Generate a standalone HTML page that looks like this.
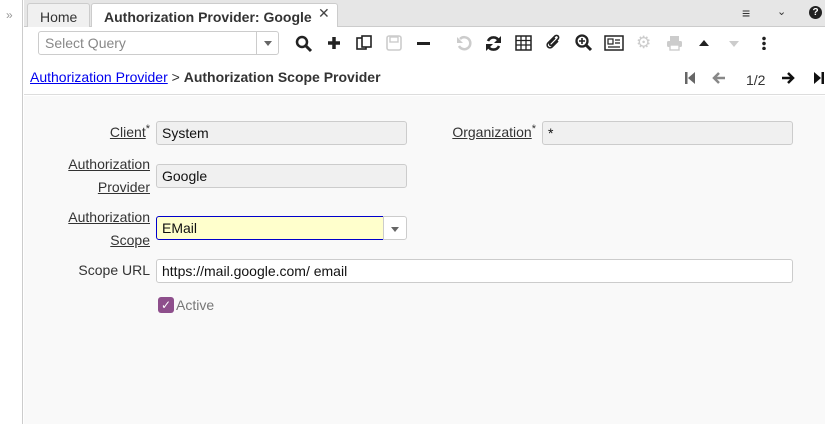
<!DOCTYPE html><html><head><style>
*{box-sizing:border-box;margin:0;padding:0}
body{width:825px;height:424px;overflow:hidden;font-family:"Liberation Sans","DejaVu Sans",sans-serif;font-size:14px;color:#333;background:#fff;position:relative}
.side{position:absolute;left:0;top:0;width:23px;height:424px;background:#fff;border-right:1px solid #ccc}
.side span{position:absolute;left:6px;top:8px;color:#999;font-size:12px}
.tabs{position:absolute;left:24px;top:0;right:0;height:27px;background:#e6e6e6;border-bottom:1px solid #ccc}
.tab{position:absolute;top:3px;height:24px;border:1px solid #ccc;border-bottom:none;border-radius:3px 3px 0 0;padding:5px 12px;font-size:14px;white-space:nowrap}
.tool{position:absolute;left:24px;top:27px;right:0;height:68px;background:#fff;border-bottom:1px solid #ddd}
.sel{position:absolute;left:14px;top:4px;width:241px;height:24px;border:1px solid #ccc;border-radius:3px;color:#888;padding:3px 6px;font-size:14px}
.sel i{position:absolute;right:0;top:0;width:22px;height:22px;border-left:1px solid #ccc}
svg{position:absolute}
.lbl{position:absolute;text-align:right;font-size:14px;color:#333;line-height:23px}
.lbl u{text-decoration:underline}
.fld{position:absolute;height:24px;border:1px solid #ccc;border-radius:3px;padding:3px 5px;font-size:14px;color:#111;background:#f0f0f0}
.content{position:absolute;left:24px;top:96px;right:0;bottom:0;background:#f9f9f9}
</style></head><body>
<div class="side"><span>»</span></div>
<div class="tabs">
<div class="tab" style="left:3px;width:63px;background:#f0f0f0;color:#333">Home</div>
<div class="tab" style="left:67px;width:247px;background:#fff;font-weight:bold;color:#333">Authorization Provider: Google</div>
<div style="position:absolute;left:294px;top:5px;font-size:14px;font-weight:bold;color:#444">✕</div>
<div style="position:absolute;left:718px;top:5px;font-size:14px;font-weight:bold">≡</div>
<div style="position:absolute;left:753px;top:5px;font-size:11px">⌄</div>
<div style="position:absolute;left:785px;top:6px;width:13px;height:13px;border-radius:50%;background:#222;color:#fff;font-size:10px;text-align:center;line-height:13px;font-weight:bold">?</div>
</div>
<div class="tool">
<div class="sel">Select Query<i><b style="position:absolute;left:7px;top:9px;border:4px solid transparent;border-top:5px solid #666"></b></i></div>
<div style="position:absolute;left:6px;top:42px;font-size:14px"><a style="color:#00e;text-decoration:underline">Authorization Provider</a> &gt; <b>Authorization Scope Provider</b></div>
</div>
<svg style="left:295px;top:35px" width="18" height="18"><circle cx="7" cy="7" r="5" fill="none" stroke="#222" stroke-width="2.5"/><path d="M11 11l5 5" stroke="#222" stroke-width="3"/></svg>
<svg style="left:326px;top:35px" width="16" height="16"><path d="M8 2v12M2 8h12" stroke="#222" stroke-width="3.5"/></svg>
<svg style="left:355px;top:34px" width="18" height="18"><rect x="2" y="4" width="9" height="11" fill="#fff" stroke="#222" stroke-width="1.6"/><rect x="7" y="2" width="9" height="11" fill="#fff" stroke="#222" stroke-width="1.6"/></svg>
<svg style="left:386px;top:35px" width="16" height="16"><rect x="1" y="1" width="14" height="14" rx="2" fill="none" stroke="#ccc" stroke-width="1.6"/><rect x="4" y="2" width="8" height="5" fill="none" stroke="#ccc" stroke-width="1.4"/></svg>
<div style="position:absolute;left:417px;top:42px;width:13px;height:3px;background:#222"></div>
<svg style="left:456px;top:35px" width="16" height="16"><path d="M4 4A6 6 0 1 1 3 11" fill="none" stroke="#ccc" stroke-width="2.5"/><path d="M1 2v6h6z" fill="#ccc"/></svg>
<svg style="left:485px;top:35px" width="17" height="17"><path d="M14 6A6 6 0 0 0 3 6M3 11A6 6 0 0 0 14 11" fill="none" stroke="#222" stroke-width="2.6"/><path d="M16 1v7h-7zM1 16v-7h7z" fill="#222"/></svg>
<svg style="left:515px;top:35px" width="17" height="16"><rect x="1" y="1" width="15" height="14" fill="none" stroke="#222" stroke-width="1.5"/><path d="M1 5.5h15M1 10h15M6 1v14M11 1v14" stroke="#222" stroke-width="1.3"/></svg>
<svg style="left:545px;top:34px" width="18" height="18"><path d="M13 7l-6 6a2.5 2.5 0 0 1-4-4l7-7a1.8 1.8 0 0 1 3 3l-6 6a1 1 0 0 1-2-2l5-5" fill="none" stroke="#222" stroke-width="1.6"/></svg>
<svg style="left:575px;top:34px" width="18" height="18"><circle cx="7" cy="7" r="5.5" fill="none" stroke="#222" stroke-width="2.3"/><path d="M11 11l5 5" stroke="#222" stroke-width="3"/><path d="M7 4v6M4 7h6" stroke="#222" stroke-width="1.6"/></svg>
<svg style="left:604px;top:35px" width="20" height="16"><rect x="1" y="1" width="18" height="14" fill="none" stroke="#222" stroke-width="1.5"/><rect x="4" y="4" width="5" height="5" fill="none" stroke="#222" stroke-width="1.2"/><path d="M11 5h5M11 8h5M4 12h12" stroke="#222" stroke-width="1.3"/></svg>
<div style="position:absolute;left:636px;top:33px;color:#ccc;font-size:17px">⚙</div>
<svg style="left:666px;top:35px" width="17" height="16"><rect x="4" y="1" width="9" height="5" fill="#ccc"/><rect x="1" y="6" width="15" height="6" rx="1.5" fill="#ccc"/><rect x="4" y="10" width="9" height="5" fill="#fff" stroke="#ccc" stroke-width="1.4"/></svg>
<div style="position:absolute;left:699px;top:40px;border:5px solid transparent;border-bottom:6px solid #222;border-top:none"></div>
<div style="position:absolute;left:729px;top:41px;border:5px solid transparent;border-top:6px solid #ccc;border-bottom:none"></div>
<div style="position:absolute;left:762px;top:36px;width:4px;height:14px;background:radial-gradient(circle,#222 1.6px,transparent 2px) 0 0/4px 5px"></div>
<svg style="left:685px;top:72px" width="12" height="12"><rect x="0" y="0" width="2.5" height="12" fill="#666"/><path d="M10 0L3 6l7 6z" fill="#666"/></svg>
<svg style="left:712px;top:72px" width="14" height="12"><path d="M13 6H3M7 1L2 6l5 5" fill="none" stroke="#888" stroke-width="2.5"/></svg>
<div style="position:absolute;left:746px;top:72px;font-size:14px">1/2</div>
<svg style="left:781px;top:72px" width="14" height="12"><path d="M1 6h10M7 1l5 5-5 5" fill="none" stroke="#111" stroke-width="2.5"/></svg>
<svg style="left:814px;top:72px" width="12" height="12"><path d="M0 0l7 6-7 6z" fill="#111"/><rect x="7.5" y="0" width="2.5" height="12" fill="#111"/></svg>
<div class="content"></div>
<div class="lbl" style="left:60px;top:121px;width:90px"><u>Client</u><span style="font-size:11px;position:relative;top:-5px">*</span></div>
<div class="fld" style="left:156px;top:121px;width:251px">System</div>
<div class="lbl" style="left:420px;top:121px;width:116px"><u>Organization</u><span style="font-size:11px;position:relative;top:-5px">*</span></div>
<div class="fld" style="left:542px;top:121px;width:251px">*</div>
<div class="lbl" style="left:50px;top:153px;width:100px"><u>Authorization</u><br><u>Provider</u></div>
<div class="fld" style="left:156px;top:164px;width:251px">Google</div>
<div class="lbl" style="left:50px;top:206px;width:100px"><u>Authorization</u><br><u>Scope</u></div>
<div class="fld" style="left:156px;top:216px;width:228px;background:#ffffcc;border-color:#00c;border-radius:3px 0 0 3px">EMail</div>
<div class="fld" style="left:383px;top:216px;width:24px;background:#fff;border-radius:0 3px 3px 0"><b style="position:absolute;left:7px;top:10px;border:4px solid transparent;border-top:5px solid #666"></b></div>
<div class="lbl" style="left:50px;top:259px;width:100px">Scope URL</div>
<div class="fld" style="left:156px;top:259px;width:637px;background:#fff">https://mail.google.com/ email</div>
<div style="position:absolute;left:158px;top:297px;width:16px;height:16px;background:#8e4f8c;border-radius:3px;color:#fff;font-size:12px;text-align:center;line-height:16px">✓</div>
<div style="position:absolute;left:176px;top:297px;color:#777;font-size:14px">Active</div>
</body></html>
